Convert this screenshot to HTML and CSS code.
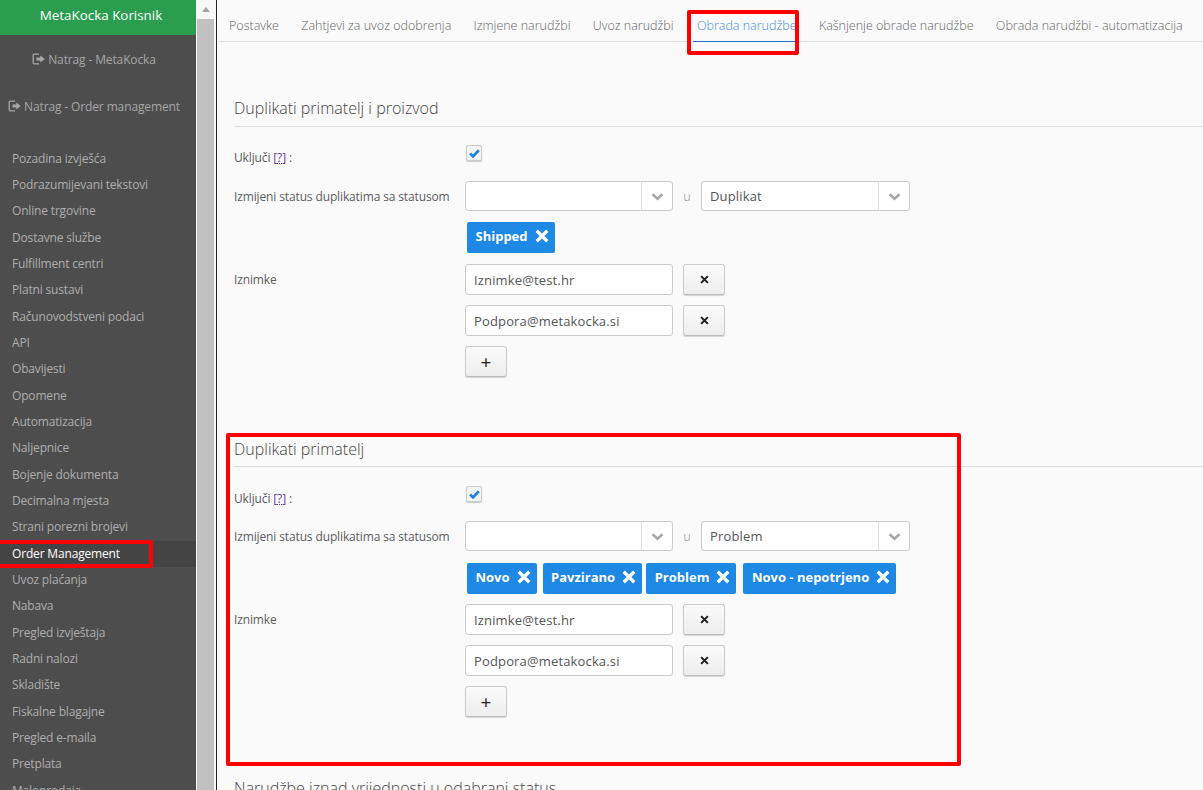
FILE: index.html
```html
<!DOCTYPE html>
<html lang="hr">
<head>
<meta charset="utf-8">
<title>Order Management</title>
<link rel="stylesheet" href="styles.css">
</head>
<body>
<svg class="defs" width="0" height="0" aria-hidden="true">
  <symbol id="logout" viewBox="0 0 13 12"><path d="M7 1.2H2.2a1 1 0 0 0-1 1v7.6a1 1 0 0 0 1 1H7" fill="none" stroke="currentColor" stroke-width="1.3"/><path d="M4.5 4.5h3.8V2.4L12.8 6 8.3 9.6V7.5H4.5z" fill="currentColor"/></symbol>
  <symbol id="chev" viewBox="0 0 14 10"><path d="M1.5 2.5L7 7.5l5.5-5" fill="none" stroke="currentColor" stroke-width="2.8"/></symbol>
  <symbol id="x" viewBox="0 0 12 12"><path d="M1.5 1.5l9 9M10.500 1.500l-9 9" fill="none" stroke="currentColor" stroke-width="2.800"/></symbol>
  <symbol id="check" viewBox="0 0 12 10"><path d="M1.200 5l3.200 3.200 6.400-6.800" fill="none" stroke="currentColor" stroke-width="3"/></symbol>
</svg>
<div class="app">
  <aside class="sidebar">
    <div class="brand">MetaKocka Korisnik</div>
    <a class="back back-first"><svg class="back-ico"><use href="#logout"/></svg> Natrag - MetaKocka</a>
    <a class="back back-second"><svg class="back-ico"><use href="#logout"/></svg> Natrag - Order management</a>
    <nav class="menu">
      <a>Pozadina izvješća</a>
      <a>Podrazumijevani tekstovi</a>
      <a>Online trgovine</a>
      <a>Dostavne službe</a>
      <a>Fulfillment centri</a>
      <a>Platni sustavi</a>
      <a>Računovodstveni podaci</a>
      <a>API</a>
      <a>Obavijesti</a>
      <a>Opomene</a>
      <a>Automatizacija</a>
      <a>Naljepnice</a>
      <a>Bojenje dokumenta</a>
      <a>Decimalna mjesta</a>
      <a>Strani porezni brojevi</a>
      <a class="active">Order Management</a>
      <a>Uvoz plaćanja</a>
      <a>Nabava</a>
      <a>Pregled izvještaja</a>
      <a>Radni nalozi</a>
      <a>Skladište</a>
      <a>Fiskalne blagajne</a>
      <a>Pregled e-maila</a>
      <a>Pretplata</a>
      <a>Maloprodaja</a>
    </nav>
  </aside>
  <div class="scrollbar"><div class="arrow"></div><div class="thumb"></div></div>
  <main class="main">
    <ul class="tabs">
      <li>Postavke</li>
      <li>Zahtjevi za uvoz odobrenja</li>
      <li>Izmjene narudžbi</li>
      <li>Uvoz narudžbi</li>
      <li class="current">Obrada narudžbe</li>
      <li>Kašnjenje obrade narudžbe</li>
      <li>Obrada narudžbi - automatizacija</li>
    </ul>

    <section class="section first">
      <h2 class="title">Duplikati primatelj i proizvod</h2>
      <div class="row row-check"><label class="lab">Uključi <a class="help">[?]</a> :</label><span class="cb"><svg class="cb-ico"><use href="#check"/></svg></span></div>
      <div class="row row-select">
        <label class="lab">Izmijeni status duplikatima sa statusom</label>
        <div class="sel"><span class="sel-val"></span><span class="sel-arrow"><svg class="chev"><use href="#chev"/></svg></span></div>
        <span class="u">u</span>
        <div class="sel"><span class="sel-val">Duplikat</span><span class="sel-arrow"><svg class="chev"><use href="#chev"/></svg></span></div>
      </div>
      <div class="tags"><span class="tag">Shipped <svg class="tag-x"><use href="#x"/></svg></span></div>
      <div class="row row-input"><label class="lab">Iznimke</label><div class="inp">Iznimke@test.hr</div><button class="btn btn-x"><svg class="btn-ico"><use href="#x"/></svg></button></div>
      <div class="row row-input"><span class="lab"></span><div class="inp">Podpora@metakocka.si</div><button class="btn btn-x"><svg class="btn-ico"><use href="#x"/></svg></button></div>
      <div class="row row-plus"><span class="lab"></span><button class="btn">+</button></div>
    </section>

    <section class="section second">
      <h2 class="title">Duplikati primatelj</h2>
      <div class="row row-check"><label class="lab">Uključi <a class="help">[?]</a> :</label><span class="cb"><svg class="cb-ico"><use href="#check"/></svg></span></div>
      <div class="row row-select">
        <label class="lab">Izmijeni status duplikatima sa statusom</label>
        <div class="sel"><span class="sel-val"></span><span class="sel-arrow"><svg class="chev"><use href="#chev"/></svg></span></div>
        <span class="u">u</span>
        <div class="sel"><span class="sel-val">Problem</span><span class="sel-arrow"><svg class="chev"><use href="#chev"/></svg></span></div>
      </div>
      <div class="tags">
        <span class="tag">Novo <svg class="tag-x"><use href="#x"/></svg></span>
        <span class="tag">Pavzirano <svg class="tag-x"><use href="#x"/></svg></span>
        <span class="tag">Problem <svg class="tag-x"><use href="#x"/></svg></span>
        <span class="tag">Novo - nepotrjeno <svg class="tag-x"><use href="#x"/></svg></span>
      </div>
      <div class="row row-input"><label class="lab">Iznimke</label><div class="inp">Iznimke@test.hr</div><button class="btn btn-x"><svg class="btn-ico"><use href="#x"/></svg></button></div>
      <div class="row row-input"><span class="lab"></span><div class="inp">Podpora@metakocka.si</div><button class="btn btn-x"><svg class="btn-ico"><use href="#x"/></svg></button></div>
      <div class="row row-plus"><span class="lab"></span><button class="btn">+</button></div>
    </section>

    <section class="section third">
      <h2 class="title">Narudžbe iznad vrijednosti u odabrani status</h2>
    </section>
  </main>
</div>
<div class="mark mark-tab"></div>
<div class="mark mark-side"></div>
<div class="mark mark-section"></div>
</body>
</html>
```
FILE: styles.css
```css
* { box-sizing: border-box; }
html, body { margin: 0; padding: 0; height: 790px; overflow: hidden; }
body { font-family: "Open Sans", "Liberation Sans", sans-serif; font-size: 12px; color: #555; background: #fafafa; position: relative; }
.defs { position: absolute; }
.app { display: flex; height: 790px; overflow: hidden; }

.sidebar { width: 196px; flex: none; background: #4d4d4d; color: #aaa; overflow: hidden; }
.brand { height: 35px; background: #2a9d4f; color: #fff; font-size: 13.4px; line-height: 31px; text-align: center; padding-left: 6px; }
.back { display: block; text-align: center; font-size: 12px; letter-spacing: -.13px; color: #a6a6a6; line-height: 18px; padding-right: 8px; }
.back-first { margin-top: 16px; }
.back-second { margin-top: 29px; }
.back-ico { width: 13px; height: 12px; vertical-align: -1px; }
.menu { margin-top: 29.500px; }
.menu a { display: block; height: 26.35px; line-height: 26px; padding-left: 12px; font-size: 12px; letter-spacing: -.17px; color: #adadad; white-space: nowrap; }
.menu a.active { background: #444; color: #fff; }

.scrollbar { width: 21px; flex: none; background: #f7f7f7; border-right: 1.500px solid #222; padding: 0 2px 0 1px; }
.arrow { width: 0; height: 0; margin: 7px auto 0; border: 4.500px solid transparent; border-top: 0; border-bottom: 5px solid #a3a3a3; }
.thumb { height: 771px; margin-top: 7px; background: #c1c1c1; }

.main { flex: 1; min-width: 0; background: #fafafa; }
.tabs { display: flex; list-style: none; margin: 0 0 0 1px; padding: 0 0 0 1px; height: 42px; border-bottom: 1px solid #ddd; }
.tabs li { padding: 0 10.400px; margin-right: 1.500px; line-height: 51px; height: 42px; font-size: 12.500px; font-weight: 300; color: #666; white-space: nowrap; }
.tabs li:first-child { padding-left: 10px; }
.tabs li.current { color: #3d8ee0; border-bottom: 1px solid #1e74cf; margin-left: 7.500px; padding-left: 4px; padding-right: 1px; margin-right: 11px; }

.section { margin-left: 17px; }
.first { margin-top: 54px; height: 341px; }
.second { height: 340px; }
.title { margin: 0; height: 31px; line-height: 24px; font-size: 16px; font-weight: 300; color: #444; border-bottom: 1px solid #ddd; }
.second .title { height: 30px; }
.third .title { border: 0; line-height: 22px; }
.row { display: flex; align-items: center; }
.lab { width: 231px; flex: none; font-size: 12px; letter-spacing: -.13px; color: #5c5c5c; }
.help { color: #6a3a9c; text-decoration: underline dotted; }
.row-check { height: 24px; margin-top: 18px; }
.second .row-check { margin-top: 19px; }
.cb { width: 16px; height: 16px; margin: -8px 0 0 1px; background: #f4f4f4; border: 1px solid #ccc; border-radius: 2px; box-shadow: 0 1px 1px rgba(0,0,0,.2); display: flex; align-items: center; justify-content: center; }
.cb-ico { width: 11px; height: 9px; color: #1e83de; }
.row-select { height: 30px; margin-top: 12px; }
.sel { width: 208px; height: 30px; display: flex; background: #fff; border: 1px solid #ccc; border-radius: 3px; }
.sel + .u + .sel { width: 209px; }
.sel-val { flex: 1; font-size: 13px; line-height: 28px; padding-left: 8px; color: #555; letter-spacing: .15px; }
.sel-arrow { width: 31px; border-left: 1px solid #ddd; display: flex; align-items: center; justify-content: center; }
.chev { width: 13px; height: 9px; color: #a8a8a8; }
.u { width: 28px; text-align: center; font-size: 12px; color: #888; font-weight: 300; }
.tags { display: flex; gap: 4px; padding-left: 233px; margin-top: 11px; }
.tag { height: 31px; display: inline-flex; align-items: center; gap: 7px; padding: 0 6px 3px 8.500px; background: #1e88e5; color: #fff; font-size: 13px; font-weight: 700; border-radius: 2px; white-space: nowrap; }
.tag:nth-child(1) { margin-right: 2px; }
.tag:nth-child(3) { margin-right: 3px; }
.tag-x { width: 14px; height: 14px; }
.row-input { height: 31px; margin-top: 11px; }
.row-input + .row-input { margin-top: 10px; }
.row-plus { margin-top: 10px; }
.second .row-select { margin-top: 11px; }
.second .sel-val { line-height: 29px; }
.second .tags { margin-top: 12px; }
.second .row-input { margin-top: 10px; }
.inp { width: 208px; height: 31px; background: #fff; border: 1px solid #ccc; border-radius: 3px; font-size: 13px; line-height: 30px; padding-left: 8px; color: #555; letter-spacing: .15px; }
.btn { width: 42px; height: 31px; padding: 0; font-family: inherit; font-size: 19px; line-height: 26px; color: #222; background: linear-gradient(#fafafa, #eee); border: 1px solid #ccc; border-bottom-color: #bbb; border-radius: 3px; box-shadow: 0 1px 1px rgba(0,0,0,.15); }
.btn-x { margin-left: 10px; display: flex; align-items: center; justify-content: center; }
.btn-ico { width: 9px; height: 9px; color: #222; }

.mark { position: absolute; border: 4px solid #f00; border-radius: 2px; pointer-events: none; }
.mark-tab { left: 687px; top: 10px; width: 112px; height: 45px; }
.mark-side { left: -4px; top: 540px; width: 157px; height: 28px; }
.mark-section { left: 226px; top: 433px; width: 735px; height: 333px; }
```
